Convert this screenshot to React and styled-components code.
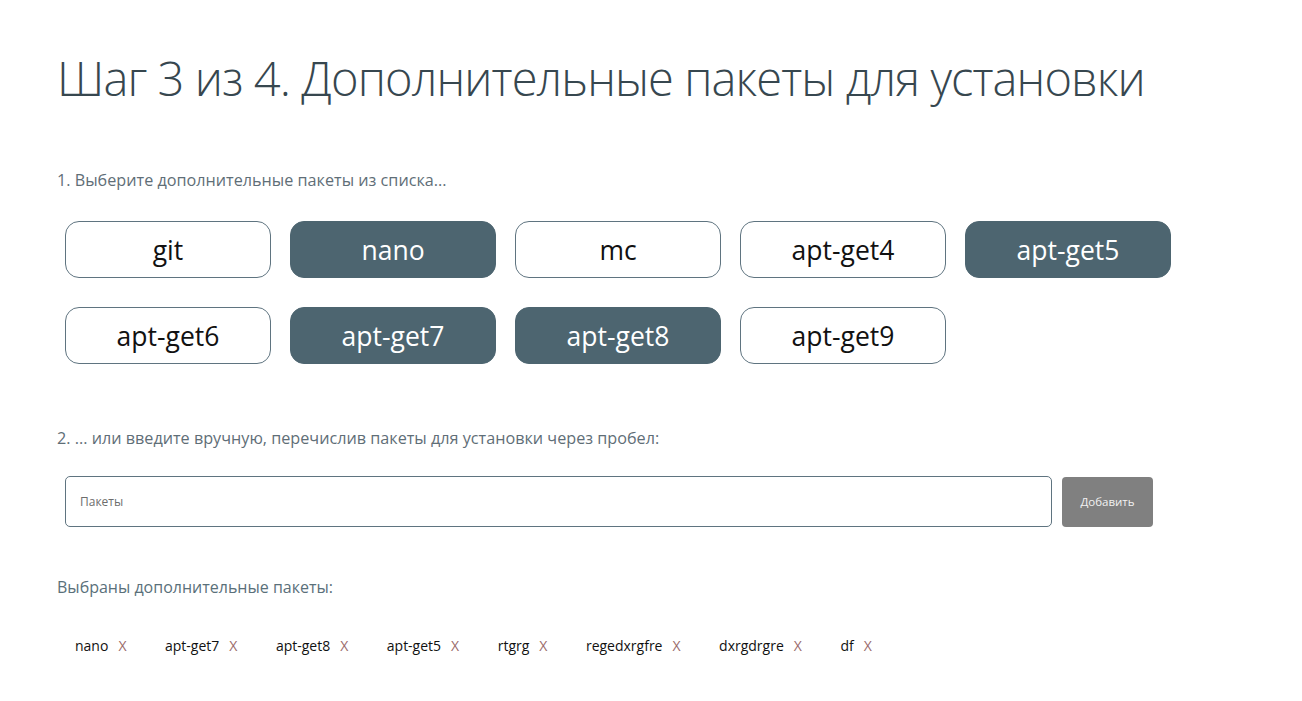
import React, { useState } from "react"
import styled, { createGlobalStyle } from "styled-components"

const GlobalStyle = createGlobalStyle`
  body {
    margin: 0;
    background: #fff;
    font-family: "Open Sans", "Noto Sans", sans-serif;
  }
`

const packages = [
  "git", "nano", "mc", "apt-get4", "apt-get5",
  "apt-get6", "apt-get7", "apt-get8", "apt-get9",
]

const initialSelected = ["nano", "apt-get7", "apt-get8", "apt-get5"]
const extra = ["rtgrg", "regedxrgfre", "dxrgdrgre", "df"]

const App = () => {
  const [selected, setSelected] = useState(initialSelected)
  const [manual, setManual] = useState(extra)

  const toggle = name =>
    setSelected(s => (s.includes(name) ? s.filter(x => x !== name) : [...s, name]))

  const remove = name => {
    setSelected(s => s.filter(x => x !== name))
    setManual(m => m.filter(x => x !== name))
  }

  return (
    <Page>
      <GlobalStyle />
      <Title>Шаг 3 из 4. Дополнительные пакеты для установки</Title>

      <StepLabel>1. Выберите дополнительные пакеты из списка...</StepLabel>
      <ChipGrid>
        {packages.map(p => (
          <Chip key={p} $active={selected.includes(p)} onClick={() => toggle(p)}>
            {p}
          </Chip>
        ))}
      </ChipGrid>

      <StepLabel>2. ... или введите вручную, перечислив пакеты для установки через пробел:</StepLabel>
      <InputRow>
        <PackageInput placeholder="Пакеты" />
        <AddButton>Добавить</AddButton>
      </InputRow>

      <SelectedTitle>Выбраны дополнительные пакеты:</SelectedTitle>
      <TagList>
        {[...selected, ...manual].map(t => (
          <Tag key={t}>
            {t}
            <Remove onClick={() => remove(t)}>X</Remove>
          </Tag>
        ))}
      </TagList>
    </Page>
  )
}

export default App

const Page = styled.div`
  padding: 48px 57px 40px;
`

const Title = styled.h1`
  margin: 0 0 62px;
  font-family: "Open Sans", sans-serif;
  font-weight: 300;
  font-size: 47px;
  line-height: 60px;
  color: #37474f;
  letter-spacing: -0.9px;
`

const StepLabel = styled.p`
  margin: 0;
  font-size: 16.2px;
  line-height: 20px;
  color: #5f6e77;
`

const ChipGrid = styled.div`
  display: grid;
  grid-template-columns: repeat(5, 206px);
  column-gap: 19px;
  row-gap: 29px;
  margin: 31px 0 64px 8px;
`

const Chip = styled.button`
  height: 57px;
  border-radius: 14px;
  border: 1px solid ${p => (p.$active ? "#4d6570" : "#5f7480")};
  background: ${p => (p.$active ? "#4d6570" : "#fff")};
  color: ${p => (p.$active ? "#fff" : "#111")};
  font-family: "Open Sans", sans-serif;
  font-size: 26.5px;
  cursor: pointer;
  padding: 0;
`

const InputRow = styled.div`
  display: flex;
  align-items: center;
  gap: 10px;
  margin: 28px 0 49px 8px;
`

const PackageInput = styled.input`
  width: 987px;
  height: 51px;
  box-sizing: border-box;
  border: 1px solid #5f7480;
  border-radius: 5px;
  padding: 0 14px;
  font-family: "Open Sans", sans-serif;
  font-size: 12px;
  outline: none;
  &::placeholder {
    color: #6d6d6d;
  }
`

const AddButton = styled.button`
  width: 91px;
  height: 50px;
  border: none;
  border-radius: 4px;
  background: #808080;
  color: #f2f2f2;
  font-family: "Open Sans", sans-serif;
  font-size: 11.5px;
  cursor: pointer;
`

const SelectedTitle = styled.p`
  margin: 0;
  font-size: 16px;
  line-height: 22px;
  color: #5a707a;
`

const TagList = styled.div`
  display: flex;
  flex-wrap: wrap;
  gap: 38.5px;
  margin: 38px 0 0 18px;
`

const Tag = styled.span`
  font-size: 14px;
  line-height: 19px;
  color: #111;
  display: inline-flex;
  gap: 10px;
`

const Remove = styled.span`
  color: #9a6a6a;
  cursor: pointer;
`
